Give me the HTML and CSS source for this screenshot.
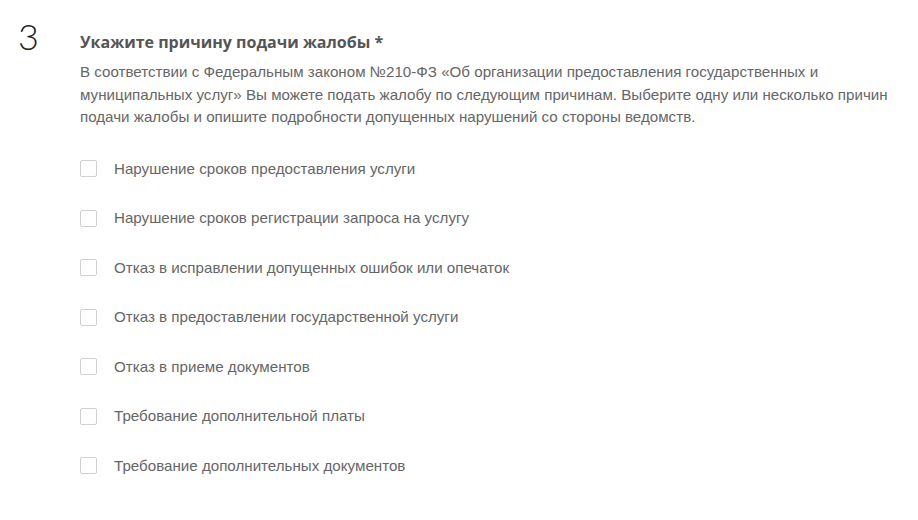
FILE: index.html
```html
<!DOCTYPE html>
<html>
<head>
  <meta charset="utf-8">
  <title>Причина жалобы</title>
  <link rel="stylesheet" href="styles.css">
</head>
<body>
  <section class="step">
    <div class="step-num">3</div>
    <div class="step-body">
      <h2 class="step-title">Укажите причину подачи жалобы *</h2>
      <p class="step-desc">В соответствии с Федеральным законом №210-ФЗ «Об организации предоставления государственных и муниципальных услуг» Вы можете подать жалобу по следующим причинам. Выберите одну или несколько причин подачи жалобы и опишите подробности допущенных нарушений со стороны ведомств.</p>

      <ul class="reasons">
        <li><label><span class="box"></span>Нарушение сроков предоставления услуги</label></li>
        <li><label><span class="box"></span>Нарушение сроков регистрации запроса на услугу</label></li>
        <li><label><span class="box"></span>Отказ в исправлении допущенных ошибок или опечаток</label></li>
        <li><label><span class="box"></span>Отказ в предоставлении государственной услуги</label></li>
        <li><label><span class="box"></span>Отказ в приеме документов</label></li>
        <li><label><span class="box"></span>Требование дополнительной платы</label></li>
        <li><label><span class="box"></span>Требование дополнительных документов</label></li>
      </ul>
    </div>
  </section>
</body>
</html>
```

FILE: styles.css
```css
* {
    margin: 0;
    padding: 0;
    box-sizing: border-box;
}

body {
    background: #fff;
    font-family: "Liberation Sans", Arial, sans-serif;
    color: #666;
}

.step {
    display: flex;
    padding: 16px 0 0 18px;
}

.step-num {
    width: 62px;
    font-family: "Lato", "Open Sans", sans-serif;
    font-weight: 300;
    font-size: 36px;
    line-height: 40px;
    color: #222;
}

.step-body {
    max-width: 815px;
}

.step-title {
    margin-top: 15px;
    font-family: "Open Sans", "DejaVu Sans", sans-serif;
    font-weight: 700;
    font-size: 16px;
    line-height: 22px;
    color: #555;
}

.step-desc {
    margin-top: 8px;
    font-size: 15.15px;
    line-height: 22.5px;
    color: #666;
}

/* список причин */
.reasons {
    list-style: none;
    margin-top: 29px;
}

.reasons li {
    height: 49.5px;
}

.reasons label {
    display: flex;
    align-items: center;
    font-size: 15.15px;
    line-height: 22px;
    color: #666;
    cursor: pointer;
}

.box {
    width: 17px;
    height: 17px;
    margin-right: 17px;
    border: 1px solid #d0d0d0;
    border-radius: 2px;
    background: #fff;
}
```
